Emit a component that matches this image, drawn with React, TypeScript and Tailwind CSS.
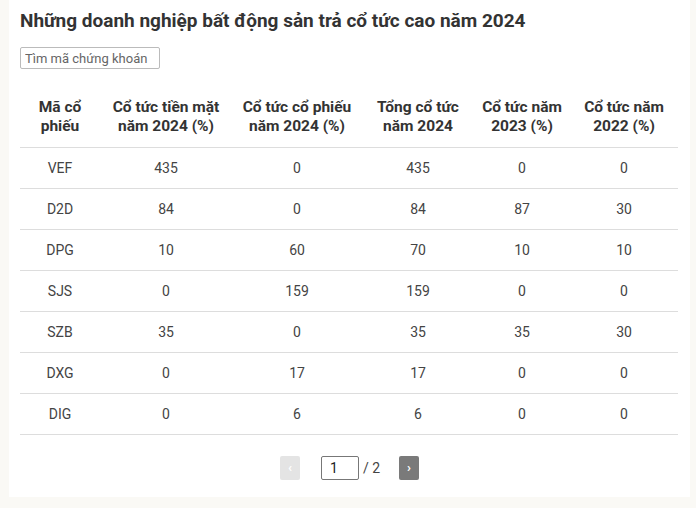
import { useState } from "react";

const rows = [
  ["VEF", "435", "0", "435", "0", "0"],
  ["D2D", "84", "0", "84", "87", "30"],
  ["DPG", "10", "60", "70", "10", "10"],
  ["SJS", "0", "159", "159", "0", "0"],
  ["SZB", "35", "0", "35", "35", "30"],
  ["DXG", "0", "17", "17", "0", "0"],
  ["DIG", "0", "6", "6", "0", "0"],
];

const headers: [string, string][] = [
  ["Mã cổ", "phiếu"],
  ["Cổ tức tiền mặt", "năm 2024 (%)"],
  ["Cổ tức cổ phiếu", "năm 2024 (%)"],
  ["Tổng cổ tức", "năm 2024"],
  ["Cổ tức năm", "2023 (%)"],
  ["Cổ tức năm", "2022 (%)"],
];

const widths = ["w-[80px]", "w-[132px]", "w-[130px]", "w-[112px]", "w-[96px]", "w-[108px]"];

export default function App() {
  const [page, setPage] = useState("1");

  return (
    <div
      className="min-h-[508px] w-[696px] bg-[#faf9f5] pl-[9px] pr-[6px]"
      style={{ fontFamily: '"Roboto", "Noto Sans", sans-serif' }}
    >
      <div className="h-[497px] bg-white px-[11px] pt-[8px]">
        <h1 className="text-[19px] font-bold leading-[26px] text-[#333]">
          Những doanh nghiệp bất động sản trả cổ tức cao năm 2024
        </h1>
        <input
          placeholder="Tìm mã chứng khoán"
          className="mt-[13px] block h-[22px] w-[140px] rounded-[2px] border border-[#bbb] px-[4px] text-[13px] text-[#333] placeholder:text-[#666] outline-none"
        />

        <table className="mt-[16px] w-[658px] border-collapse text-[14px]">
          <thead>
            <tr className="border-b border-[#ddd]">
              {headers.map(([a, b], i) => (
                <th
                  key={i}
                  className={`${widths[i]} pb-[11px] pt-[13px] text-center text-[15.5px] font-bold leading-[19px] text-[#333]`}
                >
                  {a}
                  <br />
                  {b}
                </th>
              ))}
            </tr>
          </thead>
          <tbody>
            {rows.map((r) => (
              <tr key={r[0]} className="h-[41px] border-b border-[#ddd]">
                {r.map((c, i) => (
                  <td key={i} className="text-center text-[#444]">
                    {c}
                  </td>
                ))}
              </tr>
            ))}
          </tbody>
        </table>

        <div className="mt-[21px] flex items-center justify-center">
          <button className="flex h-[24px] w-[20px] items-center justify-center rounded-[2px] bg-[#e4e4e4] text-[13px] font-bold text-white">
            ‹
          </button>
          <input
            value={page}
            onChange={(e) => setPage(e.target.value)}
            className="ml-[21px] h-[24px] w-[38px] rounded-[2px] border border-[#777] px-[8px] text-[14px] text-[#222] outline-none"
          />
          <span className="ml-[4px] text-[14px] text-[#444]">/ 2</span>
          <button className="ml-[19px] flex h-[24px] w-[20px] items-center justify-center rounded-[2px] bg-[#7a7a7a] text-[13px] font-bold text-white">
            ›
          </button>
        </div>
      </div>
    </div>
  );
}
